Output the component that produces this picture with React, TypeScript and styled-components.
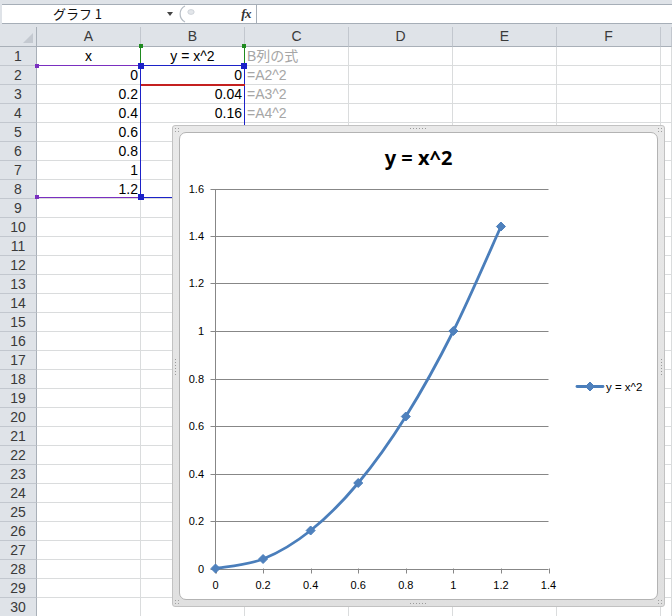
import React from "react";
import styled, { createGlobalStyle } from "styled-components";

const GlobalStyle = createGlobalStyle`
  html, body {
    margin: 0;
    padding: 0;
    background: #ffffff;
    overflow: hidden;
  }
  body {
    font-family: "Liberation Sans", "Noto Sans CJK JP", sans-serif;
  }
`;

const CELL_FONT = `"Liberation Sans", "Noto Sans CJK JP", sans-serif`;

// 数式バー
const Window = styled.div`
  width: 672px;
  height: 616px;
  overflow: hidden;
  position: relative;
  background: #ffffff;
`;

const FormulaBar = styled.div`
  height: 27px;
  box-sizing: border-box;
  padding: 4px 0 3px 2px;
  background: #dfe3e8;
`;

const FormulaRow = styled.div`
  display: flex;
  height: 20px;
  box-sizing: border-box;
  border-top: 1px solid #a6aeb7;
  border-bottom: 1px solid #a6aeb7;
  background: #ffffff;
`;

const NameBox = styled.div`
  width: 175px;
  display: flex;
  align-items: center;
  position: relative;
`;

const NameText = styled.span`
  flex: 1;
  text-align: center;
  font-family: "Noto Sans CJK JP", sans-serif;
  font-size: 13px;
  line-height: 18px;
  color: #111;
  padding-right: 14px;
`;

const DropArrow = styled.span`
  width: 0;
  height: 0;
  margin-right: 4px;
  border-left: 3.5px solid transparent;
  border-right: 3.5px solid transparent;
  border-top: 4px solid #444;
`;

const FxArea = styled.div`
  width: 80px;
  display: flex;
  align-items: center;
  justify-content: space-between;
  border-right: 1px solid #a6aeb7;
  padding: 0 5px 0 2px;
  box-sizing: border-box;
`;

const FxLabel = styled.span`
  font-family: "Liberation Serif", serif;
  font-style: italic;
  font-weight: bold;
  font-size: 13px;
  color: #333;
  letter-spacing: -0.5px;
`;

const FormulaInput = styled.div`
  flex: 1;
`;

// シート
const SheetArea = styled.div`
  position: relative;
`;

const Sheet = styled.div`
  display: grid;
  grid-template-columns: 37px repeat(6, 104px) 1fr;
  grid-template-rows: 20px;
  grid-auto-rows: 19px;
`;

const Corner = styled.div`
  background: #dfe3e8;
  border-right: 1px solid #a9b0b8;
  border-bottom: 1px solid #a9b0b8;
  box-sizing: border-box;
  position: relative;

  &::after {
    content: "";
    position: absolute;
    right: 3px;
    bottom: 3px;
    width: 0;
    height: 0;
    border-left: 10px solid transparent;
    border-bottom: 10px solid #c4c9d0;
  }
`;

const ColHeader = styled.div`
  background: #dfe3e8;
  border-right: 1px solid #c2c7ce;
  border-bottom: 1px solid #a9b0b8;
  box-sizing: border-box;
  text-align: center;
  font-family: ${CELL_FONT};
  font-size: 14px;
  line-height: 19px;
  color: #3a3a3a;
`;

const RowHeader = styled.div`
  background: #dfe3e8;
  border-right: 1px solid #a9b0b8;
  border-bottom: 1px solid #c2c7ce;
  box-sizing: border-box;
  text-align: center;
  font-family: ${CELL_FONT};
  font-size: 14px;
  line-height: 19px;
  color: #3a3a3a;
`;

const Cell = styled.div<{ $align?: "left" | "center" | "right"; $muted?: boolean }>`
  border-right: 1px solid #dadcdd;
  border-bottom: 1px solid #dadcdd;
  box-sizing: border-box;
  padding: 0 2px;
  text-align: ${(p) => p.$align || "left"};
  font-family: ${CELL_FONT};
  font-size: 14px;
  line-height: 19px;
  color: ${(p) => (p.$muted ? "#a6a6a6" : "#000")};
  white-space: nowrap;
  overflow: visible;
`;

// 参照範囲の色枠
const RangeBox = styled.div<{
  $x: number;
  $y: number;
  $w: number;
  $h: number;
  $color: string;
  $noLeft?: boolean;
  $noTop?: boolean;
}>`
  position: absolute;
  left: ${(p) => p.$x}px;
  top: ${(p) => p.$y}px;
  width: ${(p) => p.$w}px;
  height: ${(p) => p.$h}px;
  box-sizing: border-box;
  border: 1px solid ${(p) => p.$color};
  ${(p) => (p.$noLeft ? "border-left: none;" : "")}
  ${(p) => (p.$noTop ? "border-top: none;" : "")}
  pointer-events: none;
`;

const Handle = styled.span<{ $color: string; $size: number; $v: "top" | "bottom"; $h: "left" | "right" }>`
  position: absolute;
  width: ${(p) => p.$size}px;
  height: ${(p) => p.$size}px;
  background: ${(p) => p.$color};
  ${(p) => p.$v}: ${(p) => -Math.ceil(p.$size / 2)}px;
  ${(p) => p.$h}: ${(p) => -Math.ceil(p.$size / 2)}px;
`;

// グラフ
const ChartFrame = styled.div`
  position: absolute;
  left: 172px;
  top: 98px;
  width: 493px;
  height: 482px;
  box-sizing: border-box;
  padding: 6px;
  background: linear-gradient(#e9e9e9, #e0e0e0);
  border: 1px solid #c2c2c2;
  border-radius: 3px;
`;

const ChartBody = styled.div`
  width: 100%;
  height: 100%;
  box-sizing: border-box;
  background: #ffffff;
  border: 1px solid #b3b3b3;
  border-radius: 7px;
  overflow: hidden;
`;

const Grip = styled.span<{ $dir: "h" | "v" }>`
  position: absolute;
  width: ${(p) => (p.$dir === "h" ? "18px" : "3px")};
  height: ${(p) => (p.$dir === "h" ? "3px" : "18px")};
  background-image: radial-gradient(circle, #9a9a9a 0.8px, transparent 1px);
  background-size: 3px 3px;
`;

const GripTop = styled(Grip)`
  top: 1px;
  left: 236px;
`;
const GripBottom = styled(Grip)`
  bottom: 1px;
  left: 236px;
`;
const GripLeft = styled(Grip)`
  left: 1px;
  top: 232px;
`;
const GripRight = styled(Grip)`
  right: 1px;
  top: 232px;
`;

const CornerDots = styled.span<{ $pos: "tl" | "tr" | "bl" | "br" }>`
  position: absolute;
  width: 6px;
  height: 6px;
  background-image: radial-gradient(circle, #a0a0a0 0.8px, transparent 1px);
  background-size: 3px 3px;
  ${(p) => (p.$pos[0] === "t" ? "top: 1px;" : "bottom: 1px;")}
  ${(p) => (p.$pos[1] === "l" ? "left: 1px;" : "right: 1px;")}
`;

const ChartSvg = styled.svg`
  display: block;
  font-family: "Liberation Sans", Arial, sans-serif;
`;

const COLS = ["A", "B", "C", "D", "E", "F", ""];

const data = [
  { a: "0", b: "0" },
  { a: "0.2", b: "0.04" },
  { a: "0.4", b: "0.16" },
  { a: "0.6", b: "0.36" },
  { a: "0.8", b: "0.64" },
  { a: "1", b: "1" },
  { a: "1.2", b: "1.44" },
];

const points: [number, number][] = [
  [0, 0],
  [0.2, 0.04],
  [0.4, 0.16],
  [0.6, 0.36],
  [0.8, 0.64],
  [1, 1],
  [1.2, 1.44],
];

const X0 = 35.5;
const Y0 = 435.5;
const SX = 237.86;
const SY = 237.5;
const px = (x: number) => X0 + x * SX;
const py = (y: number) => Y0 - y * SY;
const fmt = (v: number) => String(Number(v.toFixed(1)));

const SERIES = "#4a7ebb";

function smoothPath(pts: [number, number][]) {
  const p = pts.map(([x, y]) => [px(x), py(y)]);
  let d = `M${p[0][0]},${p[0][1]}`;
  for (let i = 0; i < p.length - 1; i++) {
    const p0 = p[i - 1] || p[i];
    const p1 = p[i];
    const p2 = p[i + 1];
    const p3 = p[i + 2] || p2;
    const c1x = p1[0] + (p2[0] - p0[0]) / 6;
    const c1y = p1[1] + (p2[1] - p0[1]) / 6;
    const c2x = p2[0] - (p3[0] - p1[0]) / 6;
    const c2y = p2[1] - (p3[1] - p1[1]) / 6;
    d += ` C${c1x},${c1y} ${c2x},${c2y} ${p2[0]},${p2[1]}`;
  }
  return d;
}

const Diamond = ({ cx, cy }: { cx: number; cy: number }) => (
  <path
    d={`M${cx},${cy - 4.5} L${cx + 4.5},${cy} L${cx},${cy + 4.5} L${cx - 4.5},${cy} Z`}
    fill="#4f81bd"
    stroke={SERIES}
    strokeWidth={1}
  />
);

const Chart = () => {
  const yTicks = Array.from({ length: 9 }, (_, i) => i * 0.2);
  const xTicks = Array.from({ length: 8 }, (_, i) => i * 0.2);
  const right = px(1.4);
  return (
    <ChartSvg width={477} height={466} viewBox="0 0 477 466">
      <text x={238.5} y={32} textAnchor="middle" fontFamily='"Noto Sans", "Open Sans", sans-serif' fontWeight="bold" fontSize={20} fill="#000">
        y = x^2
      </text>
      {yTicks.map((v) => (
        <g key={"y" + v}>
          <line x1={X0 - 5} x2={right} y1={Math.round(py(v)) + 0.5} y2={Math.round(py(v)) + 0.5} stroke="#878787" strokeWidth={1} />
          <text x={24} y={Math.round(py(v)) + 4} textAnchor="end" fontSize={11} fill="#000">
            {fmt(v)}
          </text>
        </g>
      ))}
      <line x1={X0} x2={X0} y1={Math.round(py(1.6)) + 0.5} y2={Y0 + 5} stroke="#878787" strokeWidth={1} />
      {xTicks.map((v) => (
        <g key={"x" + v}>
          <line x1={Math.round(px(v)) + 0.5} x2={Math.round(px(v)) + 0.5} y1={Y0} y2={Y0 + 5} stroke="#878787" strokeWidth={1} />
          <text x={px(v)} y={456} textAnchor="middle" fontSize={11} fill="#000">
            {fmt(v)}
          </text>
        </g>
      ))}
      <path d={smoothPath(points)} fill="none" stroke={SERIES} strokeWidth={2.8} strokeLinejoin="round" strokeLinecap="round" />
      {points.map(([x, y]) => (
        <Diamond key={x} cx={px(x)} cy={py(y)} />
      ))}
      <line x1={397} x2={423} y1={253.5} y2={253.5} stroke={SERIES} strokeWidth={2.8} strokeLinecap="round" />
      <Diamond cx={410} cy={253.5} />
      <text x={426} y={257.5} fontSize={11.5} fill="#000">
        y = x^2
      </text>
    </ChartSvg>
  );
};

const rowCells = (r: number) => {
  if (r === 1) {
    return [
      <Cell key="a" $align="center">x</Cell>,
      <Cell key="b" $align="center">y = x^2</Cell>,
      <Cell key="c" $muted>B列の式</Cell>,
    ];
  }
  const d = data[r - 2];
  if (d) {
    return [
      <Cell key="a" $align="right">{d.a}</Cell>,
      <Cell key="b" $align="right">{d.b}</Cell>,
      <Cell key="c" $muted>{`=A${r}^2`}</Cell>,
    ];
  }
  return [<Cell key="a" />, <Cell key="b" />, <Cell key="c" />];
};

export default function App() {
  const rows = Array.from({ length: 30 }, (_, i) => i + 1);
  return (
    <Window>
      <GlobalStyle />
      <FormulaBar>
        <FormulaRow>
          <NameBox>
            <NameText>グラフ 1</NameText>
            <DropArrow />
          </NameBox>
          <FxArea>
            <svg width="20" height="18" viewBox="0 0 20 18">
              <path d="M6,1 A9,9 0 0,0 6,17" fill="none" stroke="#b5bcc4" strokeWidth="1.2" />
              <ellipse cx="12" cy="7" rx="3.2" ry="2.4" fill="#e3e6ea" stroke="#c9ced4" strokeWidth="0.8" />
            </svg>
            <FxLabel>fx</FxLabel>
          </FxArea>
          <FormulaInput />
        </FormulaRow>
      </FormulaBar>
      <SheetArea>
        <Sheet>
          <Corner />
          {COLS.map((c, i) => (
            <ColHeader key={i}>{c}</ColHeader>
          ))}
          {rows.map((r) => (
            <React.Fragment key={r}>
              <RowHeader>{r}</RowHeader>
              {rowCells(r)}
              <Cell />
              <Cell />
              <Cell />
              <Cell />
            </React.Fragment>
          ))}
        </Sheet>

        {/* 系列名 */}
        <RangeBox $x={140} $y={19} $w={105} $h={20} $color="#1f8a1f" $noTop>
          <Handle $color="#1f8a1f" $size={4} $v="top" $h="left" />
          <Handle $color="#1f8a1f" $size={4} $v="top" $h="right" />
        </RangeBox>
        {/* 項目軸 */}
        <RangeBox $x={37} $y={38} $w={104} $h={133} $color="#7a2fc0" $noLeft>
          <Handle $color="#7a2fc0" $size={4} $v="top" $h="left" />
          <Handle $color="#7a2fc0" $size={4} $v="bottom" $h="left" />
        </RangeBox>
        {/* 値 */}
        <RangeBox $x={140} $y={38} $w={105} $h={133} $color="#1c22c8">
          <Handle $color="#1c22c8" $size={6} $v="top" $h="left" />
          <Handle $color="#1c22c8" $size={6} $v="top" $h="right" />
          <Handle $color="#1c22c8" $size={6} $v="bottom" $h="left" />
          <Handle $color="#1c22c8" $size={6} $v="bottom" $h="right" />
        </RangeBox>
        <RangeBox $x={141} $y={57} $w={104} $h={1} $color="#c42020" />

        <ChartFrame>
          <GripTop $dir="h" />
          <GripBottom $dir="h" />
          <GripLeft $dir="v" />
          <GripRight $dir="v" />
          <CornerDots $pos="tl" />
          <CornerDots $pos="tr" />
          <CornerDots $pos="bl" />
          <CornerDots $pos="br" />
          <ChartBody>
            <Chart />
          </ChartBody>
        </ChartFrame>
      </SheetArea>
    </Window>
  );
}
